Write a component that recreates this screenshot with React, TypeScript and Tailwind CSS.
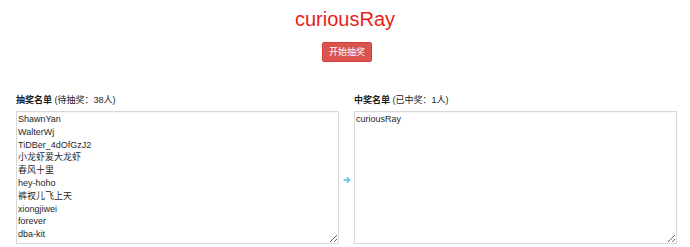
const pending = [
  "ShawnYan",
  "WalterWj",
  "TiDBer_4dOfGzJ2",
  "小龙虾爱大龙虾",
  "春风十里",
  "hey-hoho",
  "裤衩儿飞上天",
  "xiongjiwei",
  "forever",
  "dba-kit",
];

const winners = ["curiousRay"];

const font = "font-['Liberation_Sans','Noto_Sans_CJK_SC',sans-serif]";

const NameBox = ({ title, note, names }: { title: string; note: string; names: string[] }) => (
  <div className="flex w-[323px] flex-col">
    <label className="mb-[5px] h-[12px] text-[9px] leading-[12px] text-[#1a1a1a]">
      <span className="font-bold">{title}</span> {note}
    </label>
    <textarea
      readOnly
      value={names.join("\n")}
      className={`${font} h-[133px] w-full border border-[#d9d9d9] bg-white px-[1px] py-[1px] text-[9px] leading-[12.8px] text-[#1f1f1f] shadow-[inset_0_1px_1px_rgba(0,0,0,0.04)] outline-none`}
    />
  </div>
);

export default function App() {
  return (
    <div className={`${font} h-[247px] w-[690px] overflow-hidden bg-white`}>
      <h1 className="pt-[7px] text-center text-[20px] leading-[24px] text-[#e8221a]">curiousRay</h1>

      <div className="mt-[11px] flex justify-center pl-[4px]">
        <button className="h-[20px] w-[50px] rounded-[2px] border border-[#d43f3a] bg-[#d9534f] text-[9px] leading-[18px] text-white">
          开始抽奖
        </button>
      </div>

      <div className="mt-[32px] flex items-start pl-[16px]">
        <NameBox title="抽奖名单" note="(待抽奖：38人)" names={pending} />
        <div className="flex h-[133px] w-[15px] items-center justify-center self-end pt-[5px]">
          <svg width="8" height="8" viewBox="0 0 16 16" fill="#5bc0de">
            <path d="M8.5 1.5 L15 8 L8.5 14.5 L6.5 12.5 L9.5 9.5 H1 V6.5 H9.5 L6.5 3.5 Z" />
          </svg>
        </div>
        <NameBox title="中奖名单" note="(已中奖：1人)" names={winners} />
      </div>
    </div>
  );
}
